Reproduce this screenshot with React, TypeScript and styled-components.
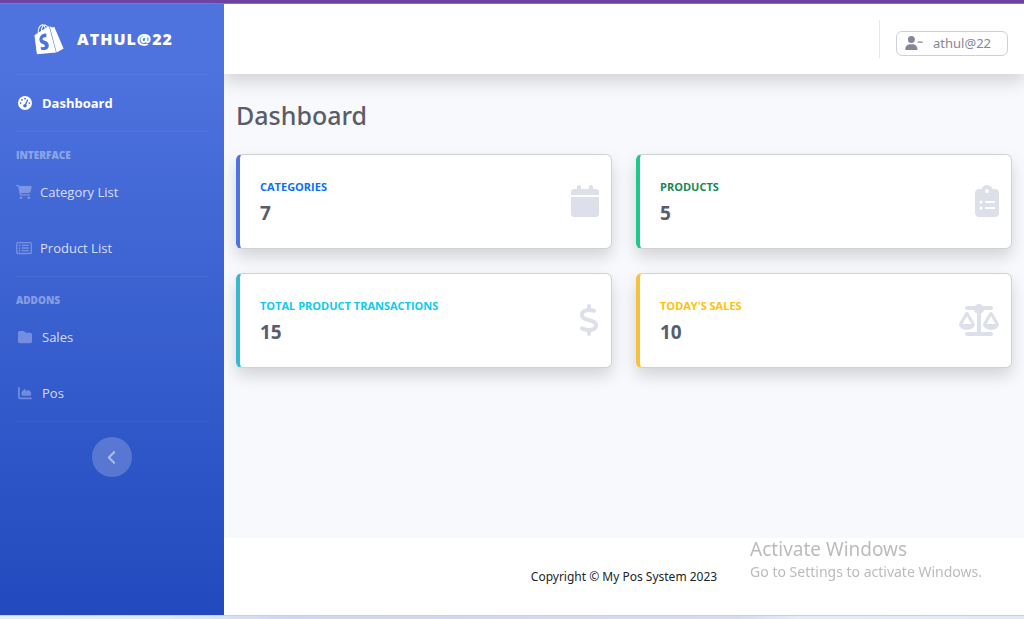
import React from "react";
import styled, { createGlobalStyle } from "styled-components";
import type { IconType } from "react-icons";
import {
  FaAngleLeft,
  FaCalendar,
  FaCartShopping,
  FaChartArea,
  FaClipboardList,
  FaDollarSign,
  FaFolder,
  FaGaugeHigh,
  FaRegRectangleList,
  FaScaleBalanced,
  FaShopify,
  FaUserMinus,
} from "react-icons/fa6";

const GlobalStyle = createGlobalStyle`
  *, *::before, *::after { box-sizing: border-box; }
  body {
    margin: 0;
    font-family: "Open Sans", "Noto Sans", sans-serif;
    font-size: 14px;
    color: #212529;
    background: #f8f9fc;
  }
`;

const Page = styled.div`
  min-height: 100vh;
  display: flex;
  flex-direction: column;
`;

const TopStrip = styled.div`
  height: 4px;
  background: #6f42a5;
  border-bottom: 1px solid #8e6fc0;
`;

const BottomStrip = styled.div`
  height: 4px;
  border-top: 1px solid #c5cfe8;
  background: linear-gradient(90deg, #e3effb 0%, #e0ebf9 16%, #ccd8f0 28%, #d5d9ee 55%, #d3dcf2 72%, #e2edfa 78%, #dfeaf8 100%);
`;

const Shell = styled.div`
  flex: 1;
  display: flex;
`;

const Sidebar = styled.nav`
  flex: 0 0 224px;
  z-index: 1;
  display: flex;
  flex-direction: column;
  background: linear-gradient(180deg, #4e73df 10%, #224abe 100%);
`;

const Brand = styled.a`
  height: 70px;
  display: flex;
  align-items: center;
  justify-content: center;
  gap: 16px;
  padding-right: 18px;
  color: #fff;
  font-size: 16px;
  font-weight: 800;
  letter-spacing: 1px;
  text-decoration: none;
  text-transform: uppercase;
`;

const BrandIcon = styled(FaShopify)`
  width: 28px;
  height: 32px;
  transform: rotate(-15deg);
`;

const Divider = styled.hr<{ $spaced?: boolean }>`
  width: calc(100% - 32px);
  height: 1px;
  margin: 0 16px ${(p) => (p.$spaced ? 15 : 0)}px;
  border: 0;
  background: rgba(255, 255, 255, 0.05);
`;

const SidebarHeading = styled.div`
  padding: 0 16px 1px;
  font-size: 10px;
  line-height: 16px;
  font-weight: 800;
  text-transform: uppercase;
  color: rgba(255, 255, 255, 0.4);
`;

const NavLink = styled.a<{ $active?: boolean; $wide?: boolean }>`
  height: 56px;
  display: flex;
  align-items: center;
  gap: 8px;
  padding: 0 16px;
  font-size: 13px;
  font-weight: ${(p) => (p.$active ? 700 : 400)};
  color: ${(p) => (p.$active ? "#fff" : "rgba(255, 255, 255, 0.8)")};
  text-decoration: none;

  svg {
    width: ${(p) => (p.$wide ? 18 : 16)}px;
    height: 14px;
    color: ${(p) => (p.$active ? "#fff" : "rgba(255, 255, 255, 0.3)")};
  }
`;

const ToggleButton = styled.button`
  width: 40px;
  height: 40px;
  align-self: center;
  display: flex;
  align-items: center;
  justify-content: center;
  padding: 0;
  border: 0;
  border-radius: 50%;
  background: rgba(255, 255, 255, 0.2);
  color: rgba(255, 255, 255, 0.5);

  svg {
    width: 12px;
    height: 17px;
  }
`;

const Main = styled.div`
  flex: 1;
  min-width: 0;
  display: flex;
  flex-direction: column;
`;

const Topbar = styled.header`
  height: 70px;
  display: flex;
  align-items: center;
  justify-content: flex-end;
  gap: 16px;
  padding: 0 16px;
  background: #fff;
  box-shadow: 0 8px 16px rgba(0, 0, 0, 0.15);
`;

const TopbarDivider = styled.div`
  width: 1px;
  height: 38px;
  background: #e3e6f0;
`;

const UserButton = styled.button`
  display: flex;
  align-items: center;
  gap: 10px;
  height: 25px;
  margin-top: 8px;
  padding: 0 16px 0 8px;
  border: 1px solid #ced0d3;
  border-radius: 6px;
  background: #fff;
  color: #858796;
  font-family: "Noto Sans", sans-serif;
  font-size: 13px;

  svg {
    width: 18px;
    height: 14px;
  }
`;

const Content = styled.main`
  flex: 1;
  padding: 24px 12px;
`;

const Title = styled.h1`
  margin: 0 0 22px;
  font-family: "Noto Sans", sans-serif;
  font-size: 25px;
  line-height: 34px;
  font-weight: 500;
  color: #5a5c69;
`;

const CardGrid = styled.div`
  display: grid;
  grid-template-columns: 1fr 1fr;
  gap: 24px;
`;

const Card = styled.article<{ $accent: string }>`
  height: 95px;
  display: flex;
  align-items: center;
  justify-content: space-between;
  padding: 0 12px 1px 20px;
  background: #fff;
  border: 1px solid #d0d1d3;
  border-left: 4px solid ${(p) => p.$accent};
  border-radius: 6px;
  box-shadow: 0 8px 16px rgba(0, 0, 0, 0.15);
`;

const CardIcon = styled.svg<{ $width: number }>`
  width: ${(p) => p.$width}px;
  height: 32px;
  color: #dddfeb;
`;

const CardText = styled.div`
  padding-top: 2px;
`;

const CardLabel = styled.h2<{ $color: string }>`
  margin: 0 0 6px;
  font-size: 11px;
  line-height: 16px;
  font-weight: 700;
  text-transform: uppercase;
  color: ${(p) => p.$color};
`;

const CardValue = styled.div`
  font-size: 19px;
  line-height: 24px;
  font-weight: 700;
  color: #5a5c69;
`;

const Footer = styled.footer`
  height: 77px;
  display: flex;
  align-items: center;
  justify-content: center;
  background: #fff;
  font-family: "Noto Sans", sans-serif;
  font-size: 12px;
`;

const Watermark = styled.aside`
  position: fixed;
  right: 42px;
  bottom: 37px;
  color: rgba(120, 120, 120, 0.5);
  font-family: "Noto Sans", sans-serif;
  pointer-events: none;
`;

const WatermarkTitle = styled.div`
  font-size: 19px;
  line-height: 26px;
`;

const WatermarkText = styled.div`
  font-size: 14px;
  line-height: 20px;
`;

interface Stat {
  label: string;
  value: number;
  accent: string;
  color: string;
  icon: IconType;
  iconWidth: number;
}

const stats: Stat[] = [
  { label: "Categories", value: 7, accent: "#4e73df", color: "#0d6efd", icon: FaCalendar, iconWidth: 28 },
  { label: "Products", value: 5, accent: "#1cc88a", color: "#198754", icon: FaClipboardList, iconWidth: 24 },
  { label: "Total Product Transactions", value: 15, accent: "#36b9cc", color: "#0dcaf0", icon: FaDollarSign, iconWidth: 20 },
  { label: "Today's Sales", value: 10, accent: "#f6c23e", color: "#ffc107", icon: FaScaleBalanced, iconWidth: 40 },
];

interface NavItemProps {
  icon: IconType;
  label: string;
  active?: boolean;
  wide?: boolean;
}

function NavItem({ icon: Icon, label, active, wide }: NavItemProps) {
  return (
    <NavLink href="#" $active={active} $wide={wide} aria-current={active ? "page" : undefined}>
      <Icon />
      <span>{label}</span>
    </NavLink>
  );
}

export default function App() {
  return (
    <Page>
      <GlobalStyle />
      <TopStrip />
      <Shell>
        <Sidebar>
          <Brand href="#">
            <BrandIcon />
            <span>athul@22</span>
          </Brand>
          <Divider />
          <NavItem icon={FaGaugeHigh} label="Dashboard" active wide />
          <Divider $spaced />
          <SidebarHeading>Interface</SidebarHeading>
          <NavItem icon={FaCartShopping} label="Category List" />
          <NavItem icon={FaRegRectangleList} label="Product List" />
          <Divider $spaced />
          <SidebarHeading>Addons</SidebarHeading>
          <NavItem icon={FaFolder} label="Sales" wide />
          <NavItem icon={FaChartArea} label="Pos" wide />
          <Divider $spaced />
          <ToggleButton type="button" aria-label="Collapse sidebar">
            <FaAngleLeft />
          </ToggleButton>
        </Sidebar>
        <Main>
          <Topbar>
            <TopbarDivider />
            <UserButton type="button">
              <FaUserMinus />
              <span>athul@22</span>
            </UserButton>
          </Topbar>
          <Content>
            <Title>Dashboard</Title>
            <CardGrid>
              {stats.map(({ label, value, accent, color, icon, iconWidth }) => (
                <Card key={label} $accent={accent}>
                  <CardText>
                    <CardLabel $color={color}>{label}</CardLabel>
                    <CardValue>{value}</CardValue>
                  </CardText>
                  <CardIcon as={icon} $width={iconWidth} />
                </Card>
              ))}
            </CardGrid>
          </Content>
          <Footer>Copyright © My Pos System 2023</Footer>
        </Main>
      </Shell>
      <BottomStrip />
      <Watermark>
        <WatermarkTitle>Activate Windows</WatermarkTitle>
        <WatermarkText>Go to Settings to activate Windows.</WatermarkText>
      </Watermark>
    </Page>
  );
}
